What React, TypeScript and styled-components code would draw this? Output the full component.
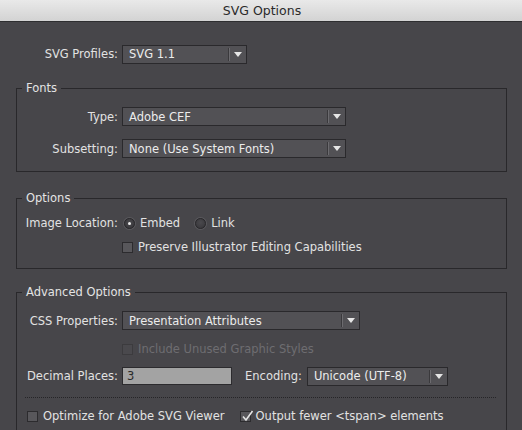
import React from "react";
import styled, { createGlobalStyle } from "styled-components";

const Global = createGlobalStyle`
  html, body { margin: 0; padding: 0; }
  body {
    width: 522px;
    height: 430px;
    overflow: hidden;
    background: #47464a;
    font-family: "DejaVu Sans", "Liberation Sans", sans-serif;
    font-size: 11.5px;
    color: #e2e2e2;
  }
`;

const Window = styled.div`
  width: 522px;
  height: 430px;
  overflow: hidden;
  display: flex;
  flex-direction: column;
  background: #47464a;
`;

const TitleBar = styled.div`
  height: 21px;
  flex: none;
  display: flex;
  align-items: center;
  justify-content: center;
  background: linear-gradient(#e9e9e9, #d3d3d3);
  border-bottom: 1px solid #2e2e30;
  color: #2a2a2a;
  font-size: 12.5px;
  padding-left: 2px;
`;

const Body = styled.div`
  display: flex;
  flex-direction: column;
  padding: 23px 15px 0 16px;
`;

const Row = styled.div<{ $mt?: number; $h?: number; $pl?: number }>`
  display: flex;
  align-items: center;
  height: ${(p) => p.$h ?? 19}px;
  margin-top: ${(p) => p.$mt ?? 0}px;
  padding-left: ${(p) => p.$pl ?? 0}px;
  flex: none;
`;

const Label = styled.span<{ $w?: number; $gap?: number; $ml?: number }>`
  width: ${(p) => (p.$w != null ? `${p.$w}px` : "auto")};
  text-align: right;
  margin-right: ${(p) => p.$gap ?? 4}px;
  margin-left: ${(p) => p.$ml ?? 0}px;
  white-space: nowrap;
  flex: none;
`;

const Group = styled.fieldset<{ $mt: number; $pt: number; $pb: number }>`
  margin: ${(p) => p.$mt}px 0 0 0;
  padding: ${(p) => p.$pt}px 0 ${(p) => p.$pb}px 0;
  border: 1px solid #29282b;
  min-width: 0;
  display: flex;
  flex-direction: column;
`;

const Legend = styled.legend`
  margin-left: 5px;
  padding: 0 4px;
  line-height: 16px;
  color: #e4e4e4;
`;

const Select = styled.div<{ $w: number }>`
  width: ${(p) => p.$w}px;
  height: 19px;
  box-sizing: border-box;
  display: flex;
  align-items: center;
  border: 1px solid #2a292c;
  background: #525155;
  color: #ececec;
  flex: none;
`;

const SelectText = styled.span`
  flex: 1;
  padding-left: 6px;
  white-space: nowrap;
  overflow: hidden;
`;

const SelectArrow = styled.span`
  width: 16px;
  height: 13px;
  flex: none;
  display: flex;
  align-items: center;
  justify-content: center;
  border-left: 1px solid #6c6b6f;
  box-shadow: -1px 0 0 #3a393c;
`;

const Radio = styled.span<{ $on?: boolean }>`
  width: 11px;
  height: 11px;
  border-radius: 50%;
  box-sizing: border-box;
  border: 1px solid #29282b;
  background: radial-gradient(circle at 50% 40%, #4a494d, #363539);
  box-shadow: 0 0 0 1px #5a595d;
  display: inline-flex;
  align-items: center;
  justify-content: center;
  margin-left: 2px;
  margin-right: 5px;
  flex: none;
  &::after {
    content: "";
    width: 3px;
    height: 3px;
    border-radius: 50%;
    background: ${(p) => (p.$on ? "#ececec" : "transparent")};
  }
`;

const Check = styled.span<{ $disabled?: boolean }>`
  width: 11px;
  height: 11px;
  box-sizing: border-box;
  border: 1px solid ${(p) => (p.$disabled ? "#3c3b3e" : "#2c2b2e")};
  background: ${(p) => (p.$disabled ? "#4a494d" : "#58575b")};
  margin-right: 5px;
  flex: none;
  position: relative;
  display: inline-flex;
`;

const CheckMark = styled.svg`
  position: absolute;
  left: 0px;
  top: -2px;
`;

const Text = styled.span<{ $dim?: boolean; $mr?: number }>`
  color: ${(p) => (p.$dim ? "#6e6d71" : "#e2e2e2")};
  margin-right: ${(p) => p.$mr ?? 0}px;
  white-space: nowrap;
`;

const Input = styled.div`
  width: 110px;
  height: 18px;
  box-sizing: border-box;
  border: 1px solid #2c2b2e;
  background: #a3a3a3;
  color: #2a2a2a;
  padding-left: 4px;
  display: flex;
  align-items: center;
  flex: none;
`;

const Dotted = styled.div`
  margin: 12px 10px 0 8px;
  border-top: 1px dotted #262528;
  flex: none;
`;

const Arrow = () => (
  <svg width="8" height="5" viewBox="0 0 8 5">
    <path d="M0 0 L8 0 L4 5 Z" fill="#e6e6e6" />
  </svg>
);

const Dropdown = ({ w, value }: { w: number; value: string }) => (
  <Select $w={w}>
    <SelectText>{value}</SelectText>
    <SelectArrow>
      <Arrow />
    </SelectArrow>
  </Select>
);

export default function App() {
  return (
    <>
      <Global />
      <Window>
        <TitleBar>SVG Options</TitleBar>
        <Body>
          <Row $h={18}>
            <Label $w={102}>SVG Profiles:</Label>
            <Dropdown w={125} value="SVG 1.1" />
          </Row>

          <Group $mt={17} $pt={11} $pb={13}>
            <Legend>Fonts</Legend>
            <Row>
              <Label $w={101}>Type:</Label>
              <Dropdown w={224} value="Adobe CEF" />
            </Row>
            <Row $mt={13}>
              <Label $w={101}>Subsetting:</Label>
              <Dropdown w={224} value="None (Use System Fonts)" />
            </Row>
          </Group>

          <Group $mt={18} $pt={9} $pb={13}>
            <Legend>Options</Legend>
            <Row $h={16}>
              <Label $w={101}>Image Location:</Label>
              <Radio $on />
              <Text $mr={13}>Embed</Text>
              <Radio />
              <Text>Link</Text>
            </Row>
            <Row $h={16} $mt={8}>
              <Label $w={101} />
              <Check />
              <Text>Preserve Illustrator Editing Capabilities</Text>
            </Row>
          </Group>

          <Group $mt={15} $pt={11} $pb={20}>
            <Legend>Advanced Options</Legend>
            <Row $h={19}>
              <Label $w={101}>CSS Properties:</Label>
              <Dropdown w={238} value="Presentation Attributes" />
            </Row>
            <Row $h={16} $mt={11}>
              <Label $w={101} />
              <Check $disabled />
              <Text $dim>Include Unused Graphic Styles</Text>
            </Row>
            <Row $h={18} $mt={10}>
              <Label $w={101}>Decimal Places:</Label>
              <Input>3</Input>
              <Label $gap={5} $ml={13}>
                Encoding:
              </Label>
              <Dropdown w={141} value="Unicode (UTF-8)" />
            </Row>
            <Dotted />
            <Row $h={16} $mt={10} $pl={10}>
              <Check />
              <Text $mr={15}>Optimize for Adobe SVG Viewer</Text>
              <Check>
                <CheckMark width="13" height="13" viewBox="0 0 13 13">
                  <path
                    d="M2 6.5 L5 10 L11.5 1"
                    fill="none"
                    stroke="#e4e4e4"
                    strokeWidth="1.6"
                  />
                </CheckMark>
              </Check>
              <Text>Output fewer &lt;tspan&gt; elements</Text>
            </Row>
          </Group>
        </Body>
      </Window>
    </>
  );
}
